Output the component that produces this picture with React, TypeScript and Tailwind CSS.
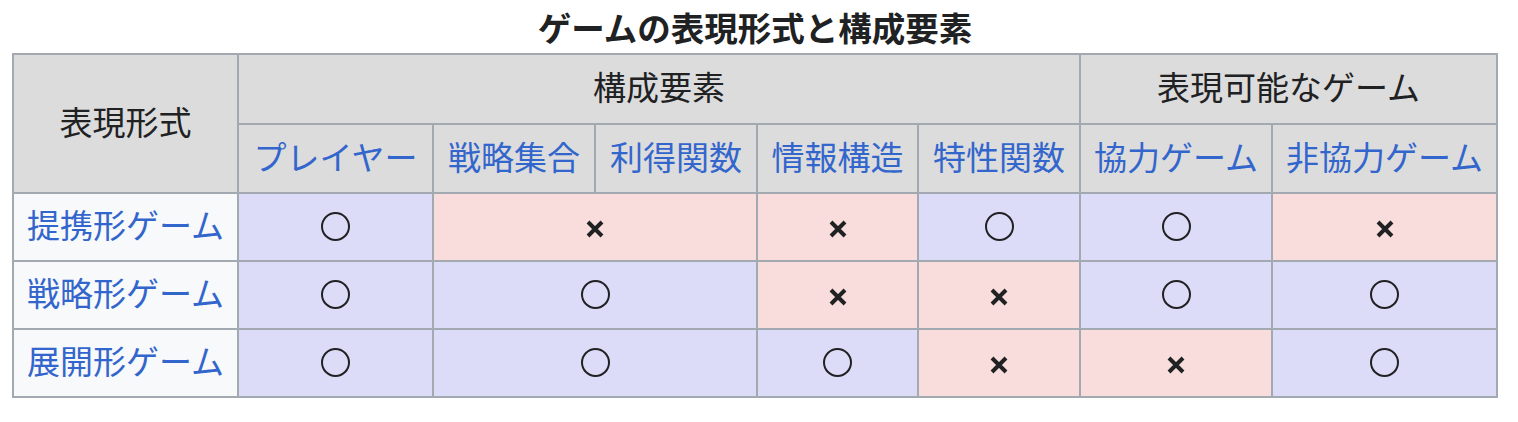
const font = { fontFamily: '"Noto Sans CJK JP", "Noto Sans", sans-serif' };

type Mark = { v: 'o' | 'x'; span?: number };

const rows: { name: string; cells: Mark[] }[] = [
  {
    name: '提携形ゲーム',
    cells: [{ v: 'o' }, { v: 'x', span: 2 }, { v: 'x' }, { v: 'o' }, { v: 'o' }, { v: 'x' }],
  },
  {
    name: '戦略形ゲーム',
    cells: [{ v: 'o' }, { v: 'o', span: 2 }, { v: 'x' }, { v: 'x' }, { v: 'o' }, { v: 'o' }],
  },
  {
    name: '展開形ゲーム',
    cells: [{ v: 'o' }, { v: 'o', span: 2 }, { v: 'o' }, { v: 'x' }, { v: 'x' }, { v: 'o' }],
  },
];

const subHeads = ['プレイヤー', '戦略集合', '利得関数', '情報構造', '特性関数', '協力ゲーム', '非協力ゲーム'];

function Cell({ mark }: { mark: Mark }) {
  const yes = mark.v === 'o';
  return (
    <td
      colSpan={mark.span}
      className={`border-2 border-[#a2a9b1] h-[68px] p-0 align-middle ${
        yes ? 'bg-[#dcdcf9]' : 'bg-[#f9dddd]'
      }`}
    >
      <div className="flex items-center justify-center">
        {yes ? (
          <span className="block w-[29px] h-[29px] -mt-[1px] rounded-full border-[2px] border-[#202122]" />
        ) : (
          <svg width="18" height="18" viewBox="0 0 18 18" className="block mt-[4px]">
            <path d="M2 2 L16 16 M16 2 L2 16" stroke="#202122" strokeWidth="4" />
          </svg>
        )}
      </div>
    </td>
  );
}

export default function App() {
  return (
    <div className="bg-white w-[1518px] h-[422px] pl-[12px]" style={font}>
      <table className="border-collapse border-2 border-[#a2a9b1] w-[1484px] table-fixed text-[33px] text-[#202122]">
        <caption className="font-bold text-[33.5px] leading-[53px] text-[#202122]">ゲームの表現形式と構成要素</caption>
        <colgroup>
          <col className="w-[225px]" />
          <col className="w-[195px]" />
          <col className="w-[162px]" />
          <col className="w-[162px]" />
          <col className="w-[161px]" />
          <col className="w-[162px]" />
          <col className="w-[192px]" />
          <col className="w-[225px]" />
        </colgroup>
        <thead>
          <tr>
            <th rowSpan={2} className="border-2 border-[#a2a9b1] bg-[#dcdcdc] font-normal">
              <span className="relative -top-[2px]">表現形式</span>
            </th>
            <th colSpan={5} className="border-2 border-[#a2a9b1] bg-[#dcdcdc] font-normal h-[70px]">
              <span className="relative -top-[2px]">構成要素</span>
            </th>
            <th colSpan={2} className="border-2 border-[#a2a9b1] bg-[#dcdcdc] font-normal">
              <span className="relative -top-[2px]">表現可能なゲーム</span>
            </th>
          </tr>
          <tr>
            {subHeads.map((h) => (
              <th
                key={h}
                className="border-2 border-[#a2a9b1] bg-[#dcdcdc] font-normal h-[69px] text-[#3366cc] whitespace-nowrap"
              >
                <a href="#" className="relative -top-[2px]">{h}</a>
              </th>
            ))}
          </tr>
        </thead>
        <tbody>
          {rows.map((r) => (
            <tr key={r.name}>
              <td className="border-2 border-[#a2a9b1] bg-[#f8f9fa] h-[68px] text-center text-[#3366cc] whitespace-nowrap">
                <a href="#" className="relative -top-[2px]">{r.name}</a>
              </td>
              {r.cells.map((c, i) => (
                <Cell key={i} mark={c} />
              ))}
            </tr>
          ))}
        </tbody>
      </table>
    </div>
  );
}
